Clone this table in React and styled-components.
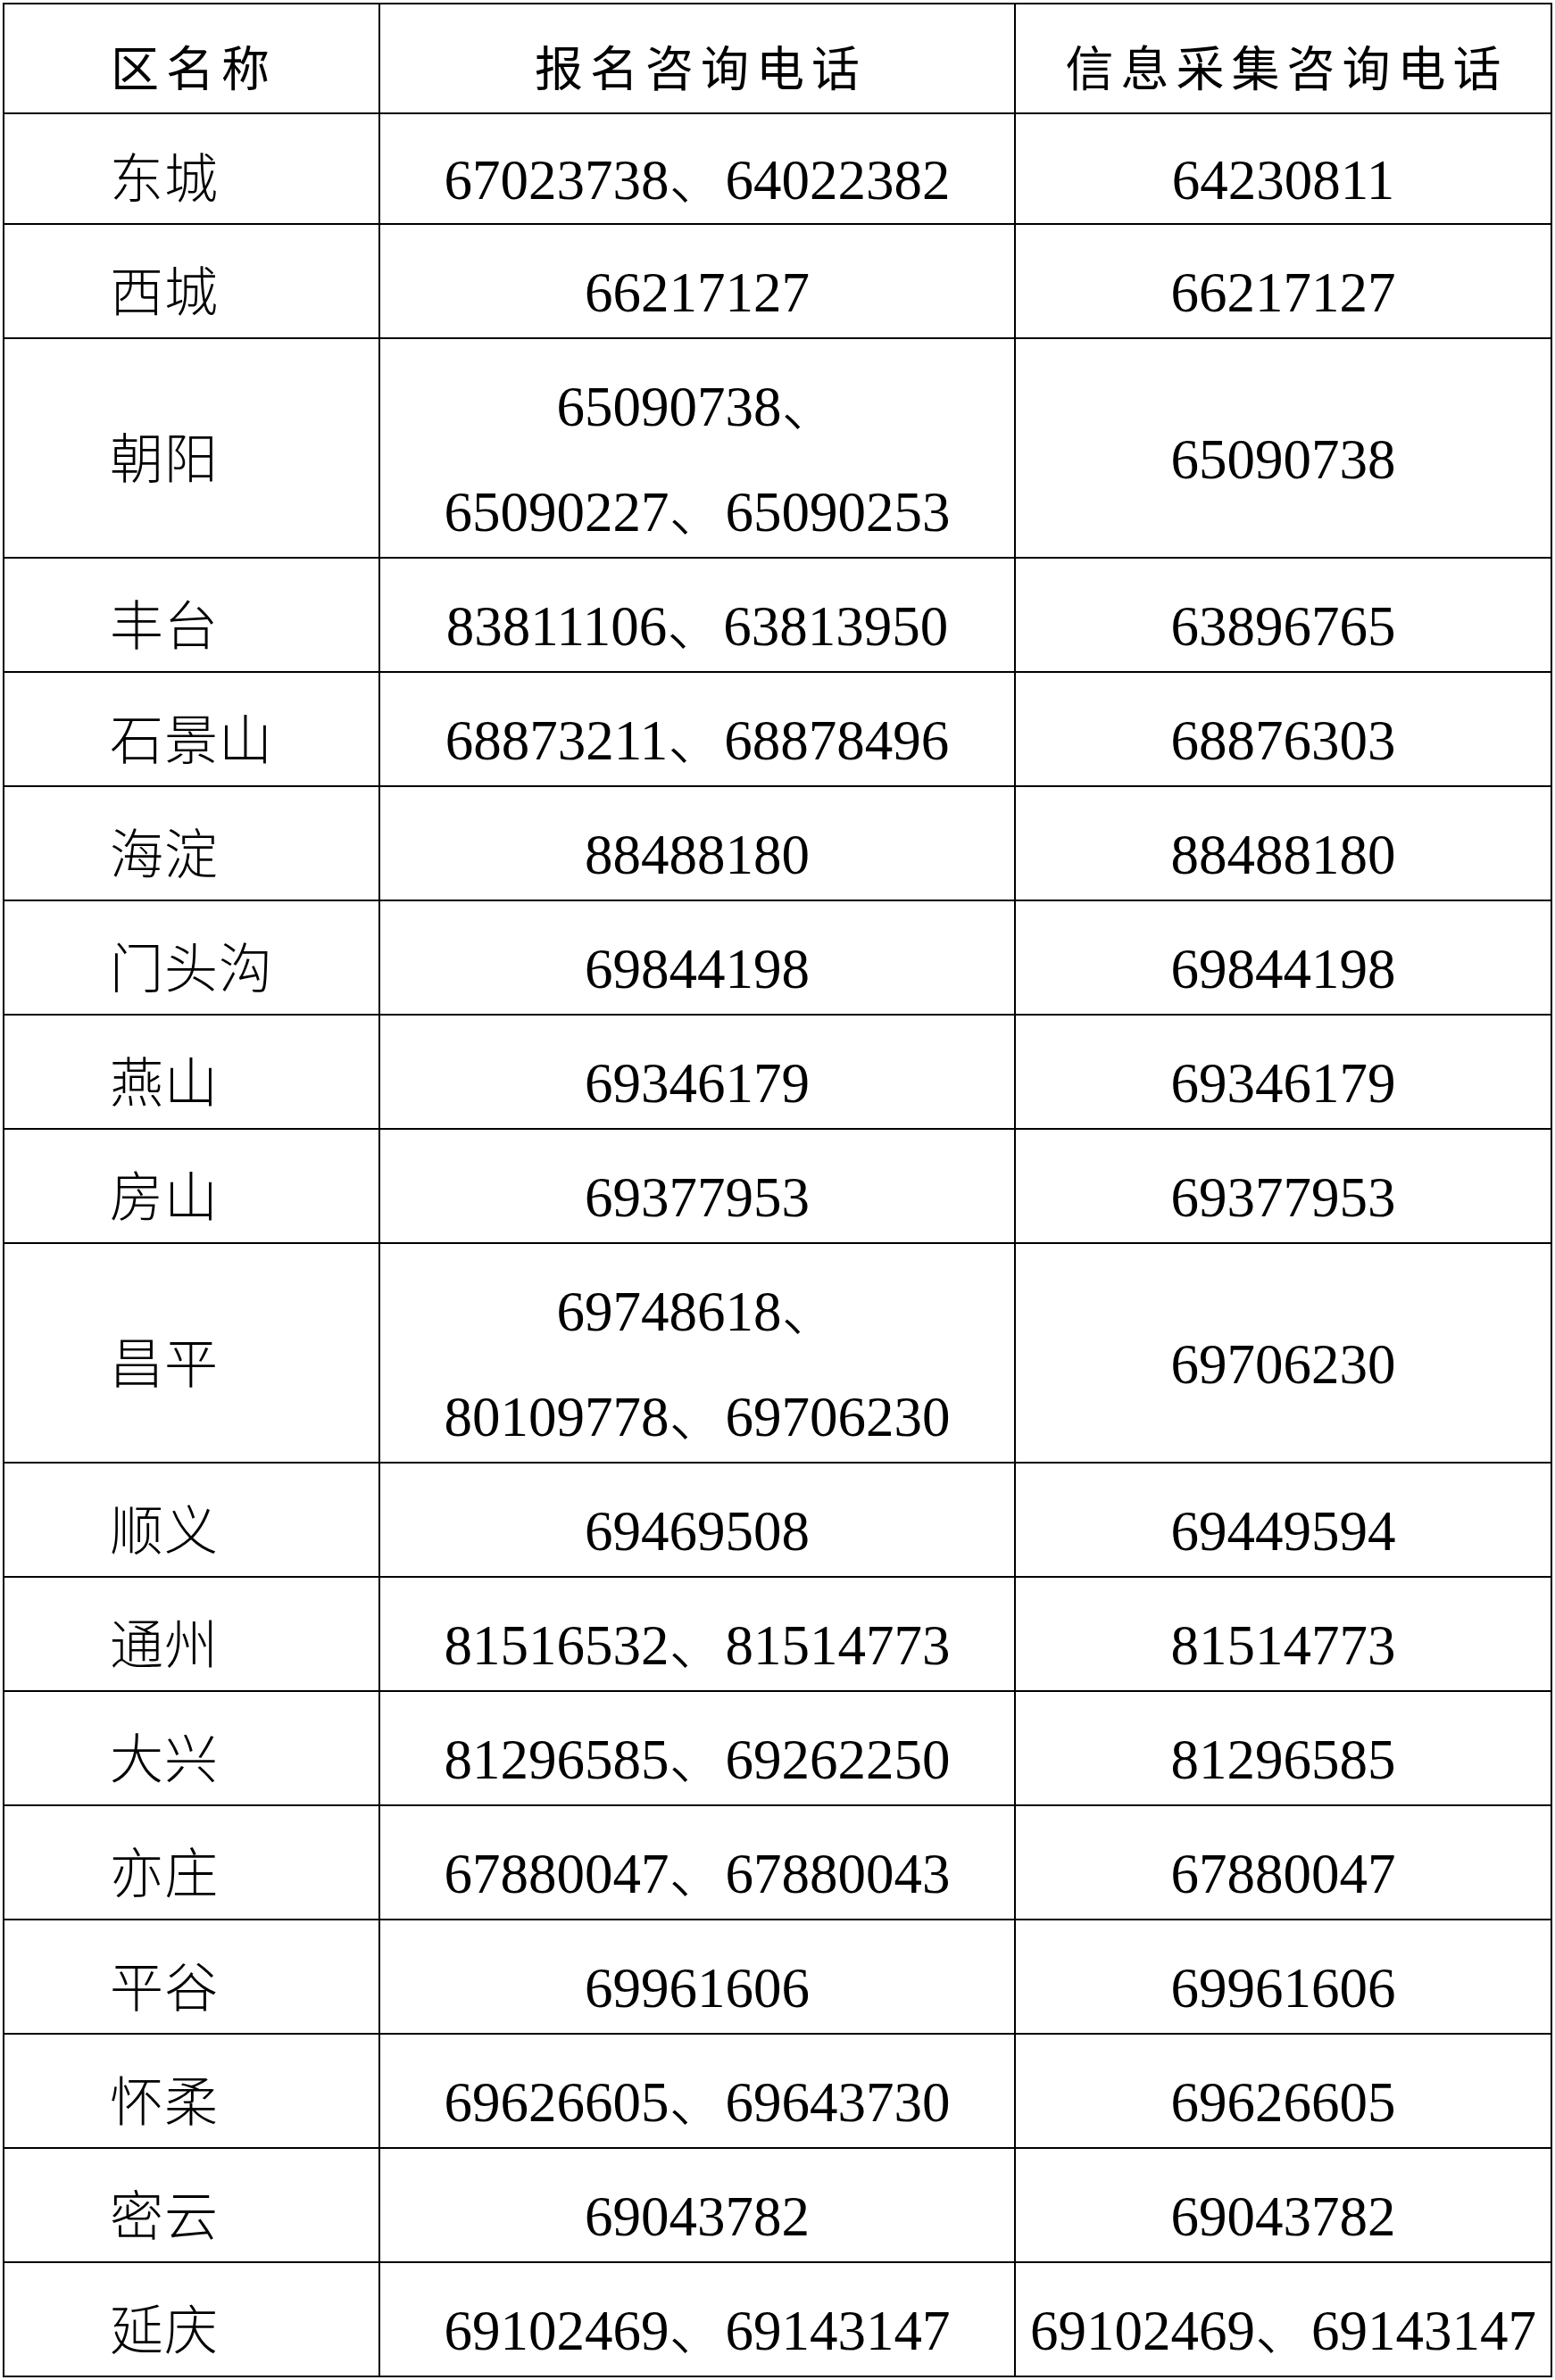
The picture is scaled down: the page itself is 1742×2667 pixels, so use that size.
import React from 'react';
import styled, { createGlobalStyle } from 'styled-components';

const GlobalStyle = createGlobalStyle`
  html, body {
    margin: 0;
    padding: 0;
    background: #fff;
  }
  body {
    font-family: "Liberation Serif", "Noto Sans CJK SC", serif;
    color: #000;
  }
`;

const rows = [
  { name: '东城', sign: ['67023738、64022382'], info: ['64230811'] },
  { name: '西城', sign: ['66217127'], info: ['66217127'] },
  { name: '朝阳', sign: ['65090738、', '65090227、65090253'], info: ['65090738'] },
  { name: '丰台', sign: ['83811106、63813950'], info: ['63896765'] },
  { name: '石景山', sign: ['68873211、68878496'], info: ['68876303'] },
  { name: '海淀', sign: ['88488180'], info: ['88488180'] },
  { name: '门头沟', sign: ['69844198'], info: ['69844198'] },
  { name: '燕山', sign: ['69346179'], info: ['69346179'] },
  { name: '房山', sign: ['69377953'], info: ['69377953'] },
  { name: '昌平', sign: ['69748618、', '80109778、69706230'], info: ['69706230'] },
  { name: '顺义', sign: ['69469508'], info: ['69449594'] },
  { name: '通州', sign: ['81516532、81514773'], info: ['81514773'] },
  { name: '大兴', sign: ['81296585、69262250'], info: ['81296585'] },
  { name: '亦庄', sign: ['67880047、67880043'], info: ['67880047'] },
  { name: '平谷', sign: ['69961606'], info: ['69961606'] },
  { name: '怀柔', sign: ['69626605、69643730'], info: ['69626605'] },
  { name: '密云', sign: ['69043782'], info: ['69043782'] },
  { name: '延庆', sign: ['69102469、69143147'], info: ['69102469、69143147'] },
];

const Page = styled.div`
  padding: 3px 3px 0 3px;
`;

const Table = styled.table`
  width: 100%;
  border-collapse: collapse;
  table-layout: fixed;
`;

const HeadCell = styled.th`
  border: 2px solid #000;
  padding: 21px 0 4px ${p => (p.$left ? '119px' : '8px')};
  text-align: ${p => (p.$left ? 'left' : 'center')};
  vertical-align: middle;
  font-family: "Noto Sans CJK SC", sans-serif;
  font-weight: 400;
  font-size: 54px;
  letter-spacing: 8px;
  line-height: 96px;
  height: 96px;
  white-space: nowrap;
`;

const NameCell = styled.td`
  border: 2px solid #000;
  padding: ${p => (p.$first ? '20px 0 6px 118px' : '23px 0 7px 118px')};
  text-align: left;
  vertical-align: middle;
  font-family: "Noto Sans CJK SC", sans-serif;
  font-weight: 300;
  font-size: 60px;
  letter-spacing: 1px;
  line-height: 96px;
  white-space: nowrap;
`;

const PhoneCell = styled.td`
  border: 2px solid #000;
  padding: ${p => (p.$first ? '26px 0 0' : '28px 0 2px')};
  text-align: center;
  vertical-align: middle;
  font-family: "Liberation Serif", "Noto Sans CJK SC", serif;
  font-size: 63px;
`;

const Line = styled.div`
  height: 96px;
  line-height: 96px;
  white-space: nowrap;
  & + & {
    margin-top: 22px;
  }
`;

const Sep = styled.span`
  font-family: "Noto Sans CJK SC", sans-serif;
  font-weight: 300;
  line-height: 0;
`;

function Phone({ text }) {
  const parts = text.split('、');
  return (
    <Line>
      {parts.map((p, i) => (
        <React.Fragment key={i}>
          {p}
          {i < parts.length - 1 && <Sep>、</Sep>}
        </React.Fragment>
      ))}
    </Line>
  );
}

export default function App() {
  return (
    <Page>
      <GlobalStyle />
      <Table>
        <colgroup>
          <col style={{ width: '421px' }} />
          <col style={{ width: '712px' }} />
          <col />
        </colgroup>
        <thead>
          <tr>
            <HeadCell $left>区名称</HeadCell>
            <HeadCell>报名咨询电话</HeadCell>
            <HeadCell>信息采集咨询电话</HeadCell>
          </tr>
        </thead>
        <tbody>
          {rows.map((r, i) => (
            <tr key={r.name}>
              <NameCell $first={i === 0}>{r.name}</NameCell>
              <PhoneCell $first={i === 0}>
                {r.sign.map(s => <Phone key={s} text={s} />)}
              </PhoneCell>
              <PhoneCell $first={i === 0}>
                {r.info.map(s => <Phone key={s} text={s} />)}
              </PhoneCell>
            </tr>
          ))}
        </tbody>
      </Table>
    </Page>
  );
}
